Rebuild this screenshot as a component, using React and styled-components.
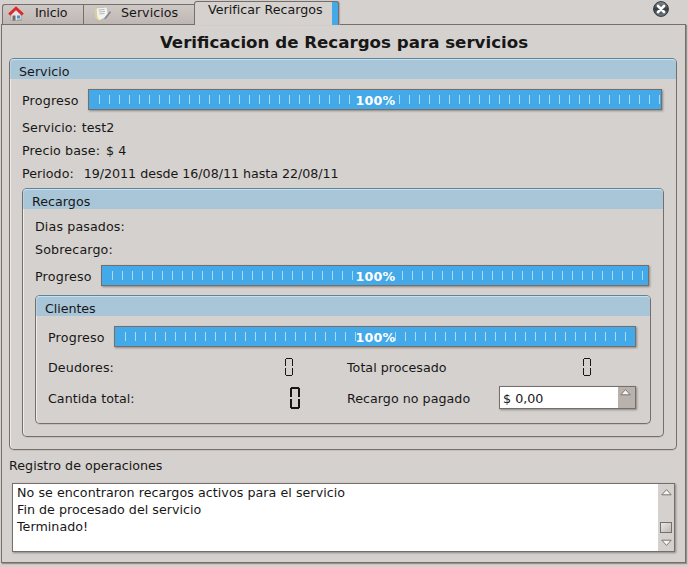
import React from 'react';
import styled, { createGlobalStyle } from 'styled-components';

const Global = createGlobalStyle`
  * { box-sizing: border-box; }
  html, body { margin: 0; background: #d5d1ce; overflow: hidden; }
`;

const line = '#766e68';

const Window = styled.main`
  width: 688px;
  height: 567px;
  display: flex;
  flex-direction: column;
  background: #d5d1ce;
  color: #171717;
  font: 12.67px/17px "DejaVu Sans", sans-serif;
  padding: 1px 2px 4px 1px;
  white-space: pre;
`;

const TabBar = styled.nav`
  height: 24px;
  display: flex;
  align-items: flex-end;
  padding-left: 1px;
  margin-bottom: -1px;
  z-index: 1;
`;

const Tab = styled.div`
  width: ${p => p.$w}px;
  height: ${p => (p.$active ? 24 : 21)}px;
  line-height: ${p => (p.$active ? 15 : 16)}px;
  display: flex;
  align-items: flex-start;
  padding-left: ${p => p.$pad}px;
  border: solid ${line};
  border-width: 1px ${p => (p.$active ? 1 : 0)}px ${p => (p.$active ? 0 : 1)}px 1px;
  border-radius: ${p => (p.$active ? '3px 3px 0 0' : p.$first ? '3px 0 0 0' : '0')};
  background: ${p => (p.$active
    ? 'linear-gradient(90deg, transparent calc(100% - 6px), #43a9e8 0) #d5d1ce'
    : 'linear-gradient(#cfc9c6, #beb6b2)')};
  box-shadow: ${p => (p.$active ? '1px 0 1px #aaa5a1' : 'none')};
`;

const TabIcon = styled.svg`
  width: 16px;
  height: 16px;
  flex: none;
  margin-right: ${p => p.$gap}px;
`;

const Text = styled.span`
  display: inline-block;
  letter-spacing: ${p => p.$ls ?? 0.03}px;
`;

const CloseButton = styled.button`
  width: 16px;
  height: 16px;
  padding: 0;
  border: 0;
  background: none;
  margin: 0 17px 8px auto;
  svg { display: block; }
`;

const Page = styled.section`
  flex: 1;
  display: flex;
  flex-direction: column;
  border: 1px solid ${line};
  box-shadow: 1px 1px 1px #97918d;
  padding: 0 8px 0 7px;
`;

const Title = styled.h1`
  margin: 0;
  height: 33px;
  padding: 8px 0 0 2px;
  font: bold 16.67px/20px "DejaVu Sans", sans-serif;
  text-align: center;
`;

const Group = styled.fieldset`
  margin: ${p => p.$m};
  height: ${p => p.$h}px;
  min-width: 0;
  padding: 0;
  border: 1px solid ${line};
  border-top-color: #648295;
  border-radius: 5px;
  box-shadow: inset 1px 0 0 #eeebe9, 0 1px 0 #c4bfbb;
`;

const GroupHead = styled.div`
  height: 20px;
  padding: 3px 0 0 8px;
  background: #a9c5d8;
  border-top: 1px solid #c3e3f2;
  border-left: 1px solid #b5d3e4;
  border-radius: 4px 4px 0 0;
`;

const Row = styled.div`
  height: ${p => p.$h}px;
  display: flex;
  align-items: center;
  padding-left: 12px;
  padding-right: 14px;
`;

const Label = styled(Text)`
  width: ${p => (p.$w ? `${p.$w}px` : 'auto')};
  flex: none;
  padding-top: 1px;
`;

const Info = styled(Text)`
  flex: none;
  padding-bottom: 1px;
  margin-left: ${p => p.$gap ?? 0}px;
`;

const Bar = styled.div`
  flex: 1;
  height: 21px;
  margin-bottom: 1px;
  display: grid;
  align-items: center;
  border: 1px solid ${line};
  background: #43a9e8;
  box-shadow: 1px 1px 2px #8c8682;
`;

const Ticks = styled.div`
  grid-area: 1 / 1;
  height: 9px;
  margin-left: 10px;
  background: repeating-linear-gradient(90deg, #a5dcfa 0 1px, transparent 1px 10px);
`;

const Percent = styled.span`
  grid-area: 1 / 1;
  justify-self: center;
  width: 39px;
  padding-top: 2px;
  color: #fff;
  font-weight: bold;
  letter-spacing: 0.2px;
  background: #43a9e8;
`;

const Digit = styled.svg`
  flex: none;
  margin-right: ${p => p.$mr}px;
`;

const Spin = styled.div`
  width: 137px;
  height: 23px;
  margin: 0 0 1px auto;
  display: flex;
  border: 1px solid ${line};
  background: #fff;
  box-shadow: 1px 1px 2px #8c8682;
  padding: 3px 0 0 3px;
`;

const SpinButton = styled.div`
  width: 17px;
  height: 21px;
  margin: -3px 0 0 auto;
  padding: 1px 0 0 2px;
  background: #b9b1ab;
  svg { display: block; }
`;

const LogLabel = styled.div`
  height: 33px;
  padding-top: 7px;
`;

const Log = styled.div`
  width: 663px;
  height: 69px;
  margin-left: 3px;
  display: flex;
  justify-content: space-between;
  border: 1px solid ${line};
  background: #fff;
  box-shadow: 1px 1px 2px #8c8682;
`;

const LogLines = styled.div`
  padding-left: 4px;
  display: flex;
  flex-direction: column;
`;

const ScrollBar = styled.div`
  width: 16px;
  display: flex;
  flex-direction: column;
  align-items: center;
  padding: 4px 0 4px;
  background: #d5d1ce;
  svg { display: block; }
`;

const Thumb = styled.div`
  width: 12px;
  height: 11px;
  margin: auto 0 6px;
  border: 1px solid ${line};
  background: linear-gradient(135deg, #e9e7e5, #bfb9b5);
`;

const Arrow = ({ down }) => (
  <svg width="11" height="8" viewBox="0 0 11 8">
    <path d={down ? 'M.8 1.2h9.4L5.5 6.4z' : 'M.8 6.8h9.4L5.5 1.6z'} fill="#f8f6f3" stroke="#7c756f" strokeWidth="1" />
  </svg>
);

const Zero = ({ w, h, bold, mr }) => {
  const s = bold ? 2 : 1;
  const m = h / 2;
  return (
    <Digit width={w} height={h} $mr={mr}>
      <path
        d={`M1 ${s / 2}H${w - 1}M1 ${h - s / 2}H${w - 1}M${s / 2} 1V${m - 1}M${w - s / 2} 1V${m - 1}M${s / 2} ${m + 1}V${h - 1}M${w - s / 2} ${m + 1}V${h - 1}`}
        stroke="#171717" strokeWidth={s} fill="none"
      />
    </Digit>
  );
};

const Progress = () => (
  <Bar><Ticks /><Percent>100%</Percent></Bar>
);

export default function App() {
  return (
    <Window>
      <Global />
      <TabBar>
        <Tab $w={81} $pad={5} $first>
          <TabIcon $gap={11} viewBox="0 0 16 16">
            <path d="M3 9l5-5 5 5v6.5H3z" fill="#e6e5e6" stroke="#9a9aa0" strokeWidth=".6" />
            <path d="M3 2.5h2v4H3z" fill="#c9c9c9" />
            <path d="M1.2 9.6L8 3.2l6.8 6.4" fill="none" stroke="#dc2a2c" strokeWidth="3" />
            <path d="M4.5 10.5h3v5h-3z" fill="#70686a" />
            <path d="M9 10.5h3v3H9z" fill="#4d8fd0" />
            <path d="M9 15h5" stroke="#7da57a" />
          </TabIcon>
          <Text $ls={-0.2}>Inicio</Text>
        </Tab>
        <Tab $w={111} $pad={11}>
          <TabIcon $gap={10} viewBox="0 0 16 16">
            <path d="M1 3l11-1 1.5 9-9 4.5L2 13z" fill="#f2f2ef" stroke="#b8b8b4" strokeWidth=".7" />
            <path d="M3.5 5l6-.6M4 7l6-.6M4.5 9l5-.6" stroke="#a8aaac" strokeWidth=".8" />
            <path d="M1 4v8l3 3" stroke="#e8dc78" strokeWidth="1.2" fill="none" />
            <path d="M15 6L10 12l-.8 2.4 2.2-1.2L16 7.5z" fill="#85898d" />
          </TabIcon>
          <Text>Servicios</Text>
        </Tab>
        <Tab $w={145} $pad={13} $active><Text>Verificar Recargos</Text></Tab>
        <CloseButton aria-label="Cerrar">
          <svg width="16" height="16">
            <defs>
              <linearGradient id="close" x2="0" y2="1">
                <stop stopColor="#8b9196" /><stop offset=".5" stopColor="#343b42" /><stop offset="1" stopColor="#7a828a" />
              </linearGradient>
            </defs>
            <circle cx="8" cy="8" r="7.4" fill="url(#close)" stroke="#30373d" />
            <path d="M5 5l6 6M11 5l-6 6" stroke="#fff" strokeWidth="2.8" strokeLinecap="round" />
          </svg>
        </CloseButton>
      </TabBar>
      <Page>
        <Title>Verificacion de Recargos para servicios</Title>
        <Group $m="0" $h={392}>
          <GroupHead><Text>Servicio</Text></GroupHead>
          <Row $h={42}><Label $w={66} $ls={0.2}>Progreso</Label><Progress /></Row>
          <Row $h={13}><Info>Servicio:</Info><Info $gap={5}>test2</Info></Row>
          <Row $h={33}><Info $ls={0.1}>Precio base:</Info><Info $gap={6}>$ 4</Info></Row>
          <Row $h={13}><Info>Periodo:</Info><Info $gap={10} $ls={-0.02}>19/2011 desde 16/08/11 hasta 22/08/11</Info></Row>
          <Group $m="8px 12px 0" $h={249}>
            <GroupHead><Text>Recargos</Text></GroupHead>
            <Row $h={35}><Info $ls={0.12}>Dias pasados:</Info></Row>
            <Row $h={12}><Info $ls={0.15}>Sobrecargo:</Info></Row>
            <Row $h={40}><Label $w={66} $ls={0.2}>Progreso</Label><Progress /></Row>
            <Group $m="-1px 12px 0" $h={129}>
              <GroupHead><Text $ls={-0.05}>Clientes</Text></GroupHead>
              <Row $h={42}><Label $w={66} $ls={0.2}>Progreso</Label><Progress /></Row>
              <Row $h={18}>
                <Label $w={237} $ls={0.12}>Deudores:</Label><Zero w={8} h={18} mr={54} />
                <Label $w={236}>Total procesado</Label><Zero w={8} h={18} mr={0} />
              </Row>
              <Row $h={44}>
                <Label $w={242}>Cantida total:</Label><Zero w={10} h={22} bold mr={47} />
                <Label>Recargo no pagado</Label>
                <Spin><Text>$ 0,00</Text><SpinButton><Arrow /></SpinButton></Spin>
              </Row>
            </Group>
          </Group>
        </Group>
        <LogLabel><Text>Registro de operaciones</Text></LogLabel>
        <Log>
          <LogLines>
            <Text $ls={0.05}>No se encontraron recargos activos para el servicio</Text>
            <Text>Fin de procesado del servicio</Text>
            <Text>Terminado!</Text>
          </LogLines>
          <ScrollBar><Arrow /><Thumb /><Arrow down /></ScrollBar>
        </Log>
      </Page>
    </Window>
  );
}
